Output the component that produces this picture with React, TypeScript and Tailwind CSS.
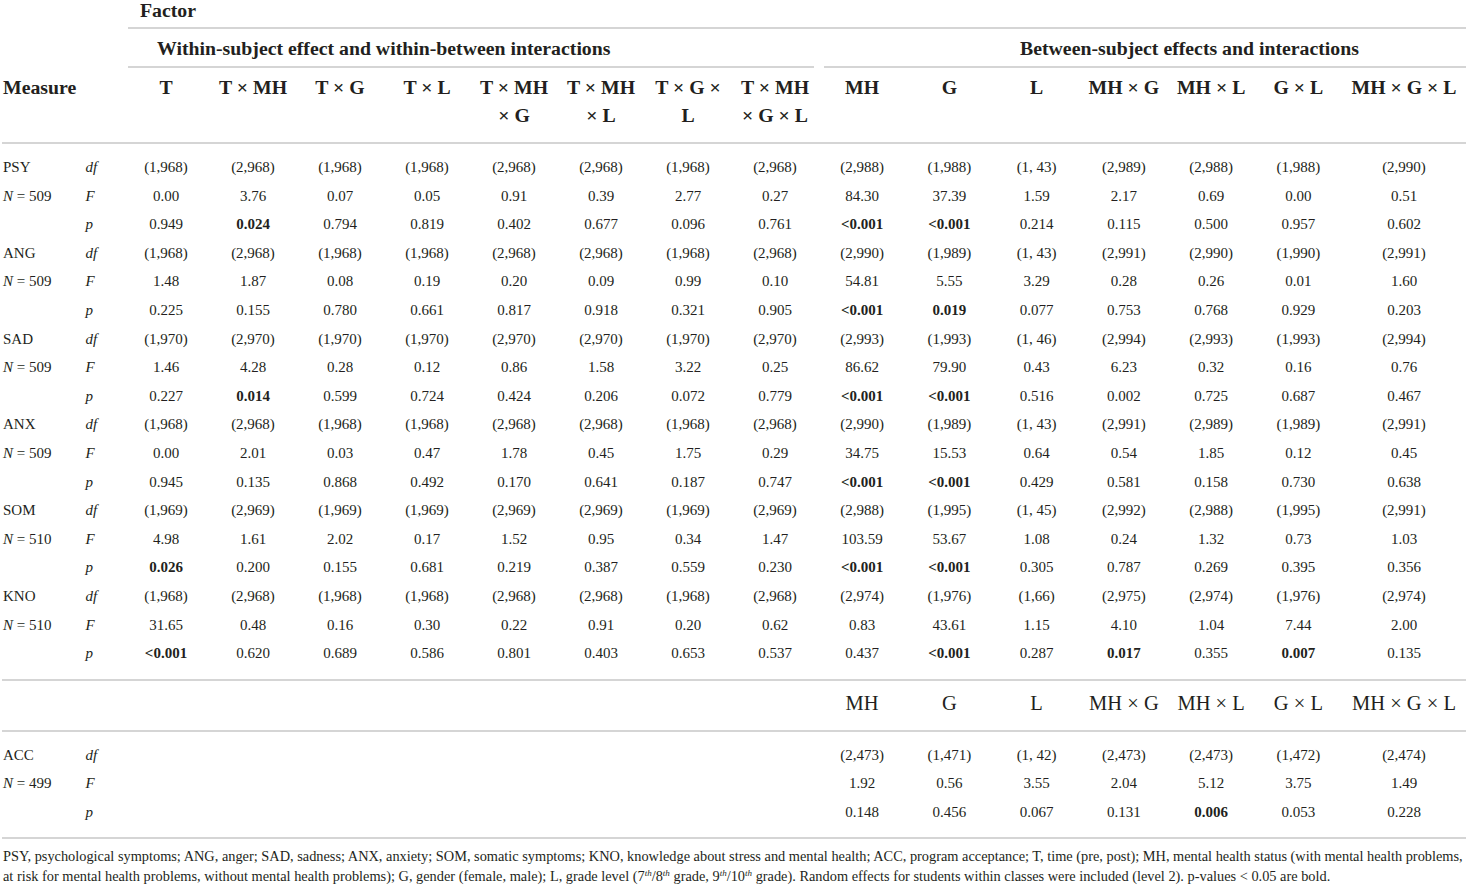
import React from "react";

const G =
  "grid grid-cols-[82px_38.5px_repeat(8,87px)_repeat(6,87.25px)_124px]";

type Cell = string;
type Block = {
  name: string;
  n: string;
  df: Cell[];
  F: Cell[];
  p: Cell[];
};

// "*" prefix means bold
const blocks: Block[] = [
  {
    name: "PSY",
    n: "509",
    df: ["(1,968)", "(2,968)", "(1,968)", "(1,968)", "(2,968)", "(2,968)", "(1,968)", "(2,968)", "(2,988)", "(1,988)", "(1, 43)", "(2,989)", "(2,988)", "(1,988)", "(2,990)"],
    F: ["0.00", "3.76", "0.07", "0.05", "0.91", "0.39", "2.77", "0.27", "84.30", "37.39", "1.59", "2.17", "0.69", "0.00", "0.51"],
    p: ["0.949", "*0.024", "0.794", "0.819", "0.402", "0.677", "0.096", "0.761", "*<0.001", "*<0.001", "0.214", "0.115", "0.500", "0.957", "0.602"],
  },
  {
    name: "ANG",
    n: "509",
    df: ["(1,968)", "(2,968)", "(1,968)", "(1,968)", "(2,968)", "(2,968)", "(1,968)", "(2,968)", "(2,990)", "(1,989)", "(1, 43)", "(2,991)", "(2,990)", "(1,990)", "(2,991)"],
    F: ["1.48", "1.87", "0.08", "0.19", "0.20", "0.09", "0.99", "0.10", "54.81", "5.55", "3.29", "0.28", "0.26", "0.01", "1.60"],
    p: ["0.225", "0.155", "0.780", "0.661", "0.817", "0.918", "0.321", "0.905", "*<0.001", "*0.019", "0.077", "0.753", "0.768", "0.929", "0.203"],
  },
  {
    name: "SAD",
    n: "509",
    df: ["(1,970)", "(2,970)", "(1,970)", "(1,970)", "(2,970)", "(2,970)", "(1,970)", "(2,970)", "(2,993)", "(1,993)", "(1, 46)", "(2,994)", "(2,993)", "(1,993)", "(2,994)"],
    F: ["1.46", "4.28", "0.28", "0.12", "0.86", "1.58", "3.22", "0.25", "86.62", "79.90", "0.43", "6.23", "0.32", "0.16", "0.76"],
    p: ["0.227", "*0.014", "0.599", "0.724", "0.424", "0.206", "0.072", "0.779", "*<0.001", "*<0.001", "0.516", "0.002", "0.725", "0.687", "0.467"],
  },
  {
    name: "ANX",
    n: "509",
    df: ["(1,968)", "(2,968)", "(1,968)", "(1,968)", "(2,968)", "(2,968)", "(1,968)", "(2,968)", "(2,990)", "(1,989)", "(1, 43)", "(2,991)", "(2,989)", "(1,989)", "(2,991)"],
    F: ["0.00", "2.01", "0.03", "0.47", "1.78", "0.45", "1.75", "0.29", "34.75", "15.53", "0.64", "0.54", "1.85", "0.12", "0.45"],
    p: ["0.945", "0.135", "0.868", "0.492", "0.170", "0.641", "0.187", "0.747", "*<0.001", "*<0.001", "0.429", "0.581", "0.158", "0.730", "0.638"],
  },
  {
    name: "SOM",
    n: "510",
    df: ["(1,969)", "(2,969)", "(1,969)", "(1,969)", "(2,969)", "(2,969)", "(1,969)", "(2,969)", "(2,988)", "(1,995)", "(1, 45)", "(2,992)", "(2,988)", "(1,995)", "(2,991)"],
    F: ["4.98", "1.61", "2.02", "0.17", "1.52", "0.95", "0.34", "1.47", "103.59", "53.67", "1.08", "0.24", "1.32", "0.73", "1.03"],
    p: ["*0.026", "0.200", "0.155", "0.681", "0.219", "0.387", "0.559", "0.230", "*<0.001", "*<0.001", "0.305", "0.787", "0.269", "0.395", "0.356"],
  },
  {
    name: "KNO",
    n: "510",
    df: ["(1,968)", "(2,968)", "(1,968)", "(1,968)", "(2,968)", "(2,968)", "(1,968)", "(2,968)", "(2,974)", "(1,976)", "(1,66)", "(2,975)", "(2,974)", "(1,976)", "(2,974)"],
    F: ["31.65", "0.48", "0.16", "0.30", "0.22", "0.91", "0.20", "0.62", "0.83", "43.61", "1.15", "4.10", "1.04", "7.44", "2.00"],
    p: ["*<0.001", "0.620", "0.689", "0.586", "0.801", "0.403", "0.653", "0.537", "0.437", "*<0.001", "0.287", "*0.017", "0.355", "*0.007", "0.135"],
  },
];

const acc: Block = {
  name: "ACC",
  n: "499",
  df: ["", "", "", "", "", "", "", "", "(2,473)", "(1,471)", "(1, 42)", "(2,473)", "(2,473)", "(1,472)", "(2,474)"],
  F: ["", "", "", "", "", "", "", "", "1.92", "0.56", "3.55", "2.04", "5.12", "3.75", "1.49"],
  p: ["", "", "", "", "", "", "", "", "0.148", "0.456", "0.067", "0.131", "*0.006", "0.053", "0.228"],
};

const withinHeads: React.ReactNode[] = [
  "T",
  "T × MH",
  "T × G",
  "T × L",
  <>T × MH<br />× G</>,
  <>T × MH<br />× L</>,
  <>T × G ×<br />L</>,
  <>T × MH<br />× G × L</>,
];
const betweenHeads = ["MH", "G", "L", "MH × G", "MH × L", "G × L", "MH × G × L"];

function Line() {
  return <div className="h-[2px] bg-[#d5d5d5]" />;
}

function DataCell({ v }: { v: string }) {
  const bold = v.startsWith("*");
  const t = bold ? v.slice(1) : v;
  return (
    <div
      className={
        "flex h-[28.6px] items-center justify-center whitespace-nowrap " +
        (bold ? "font-bold" : "")
      }
    >
      {t}
    </div>
  );
}

function BlockRows({ b }: { b: Block }) {
  const rows: { label: React.ReactNode; stat: string; vals: Cell[] }[] = [
    { label: b.name, stat: "df", vals: b.df },
    {
      label: (
        <span>
          <span className="italic">N</span>
          {" = "}
          {b.n}
        </span>
      ),
      stat: "F",
      vals: b.F,
    },
    { label: "", stat: "p", vals: b.p },
  ];
  return (
    <>
      {rows.map((r, i) => (
        <div key={i} className={G}>
          <div className="flex h-[28.6px] items-center pl-[1px] whitespace-pre">
            {r.label}
          </div>
          <div className="flex h-[28.6px] items-center pl-[1.5px] italic">
            {r.stat}
          </div>
          {r.vals.map((v, j) => (
            <DataCell key={j} v={v} />
          ))}
        </div>
      ))}
    </>
  );
}

export default function App() {
  return (
    <div className="min-h-[886px] w-[1478px] bg-white text-[#231f20] font-['Liberation_Serif',serif]">
      <div className="w-[1466px] pl-[2px]">
        {/* Factor row */}
        <div className={G}>
          <div className="col-span-2" />
          <div className="col-span-15 pl-[5px]">
            <div className="h-[27px] pl-[12.5px] text-[19.8px] font-bold leading-[20px]">
              Factor
            </div>
            <Line />
          </div>
        </div>

        {/* Group row */}
        <div className={G}>
          <div className="col-span-2" />
          <div className="col-span-8 px-[5px]">
            <div className="flex h-[37px] items-center pl-[29.5px] pt-[1px] text-[19.8px] font-bold leading-[20px] whitespace-nowrap">
              Within-subject effect and within-between interactions
            </div>
            <Line />
          </div>
          <div className="col-span-7 pl-[5.5px]">
            <div className="flex h-[37px] items-center pl-[196px] pt-[1px] text-[19.8px] font-bold leading-[20px] whitespace-nowrap">
              Between-subject effects and interactions
            </div>
            <Line />
          </div>
        </div>

        {/* Column header row */}
        <div className={G + " h-[74px] pt-[5px] text-[19.8px] font-bold leading-[28px]"}>
          <div className="col-span-2 pl-[1px]">Measure</div>
          {withinHeads.map((h, i) => (
            <div key={i} className="text-center whitespace-nowrap">
              {h}
            </div>
          ))}
          {betweenHeads.map((h, i) => (
            <div key={i} className="text-center whitespace-nowrap">
              {h}
            </div>
          ))}
        </div>
        <Line />

        {/* Body */}
        <div className="pt-[9px] pb-[11px] text-[15px]">
          {blocks.map((b) => (
            <BlockRows key={b.name} b={b} />
          ))}
        </div>
        <Line />

        {/* Second header */}
        <div className={G + " h-[49px] items-center pb-[5px] text-[20.5px] leading-[22px]"}>
          <div className="col-span-10" />
          {betweenHeads.map((h, i) => (
            <div key={i} className="text-center whitespace-nowrap">
              {h}
            </div>
          ))}
        </div>
        <Line />

        <div className="pt-[9px] pb-[11px] text-[15px]">
          <BlockRows b={acc} />
        </div>
        <Line />

        <div className="pt-[8px] pl-[1px] text-[14.35px] leading-[19.5px] whitespace-nowrap">
          <div>
            PSY, psychological symptoms; ANG, anger; SAD, sadness; ANX, anxiety; SOM, somatic symptoms; KNO, knowledge about stress and mental health; ACC, program acceptance; T, time (pre, post); MH, mental health status (with mental health problems,
          </div>
          <div>
            at risk for mental health problems, without mental health problems); G, gender (female, male); L, grade level (7
            <sup className="italic text-[9px]">th</sup>/8<sup className="italic text-[9px]">th</sup> grade, 9
            <sup className="italic text-[9px]">th</sup>/10<sup className="italic text-[9px]">th</sup> grade). Random effects for students within classes were included (level 2). p-values &lt; 0.05 are bold.
          </div>
        </div>
      </div>
    </div>
  );
}
